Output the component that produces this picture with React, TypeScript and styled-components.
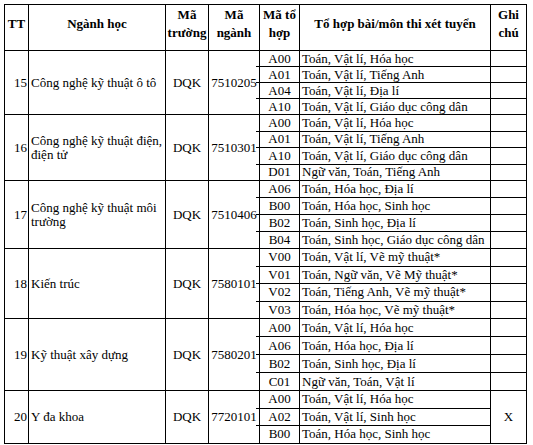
import styled, { createGlobalStyle } from "styled-components";

const GlobalStyle = createGlobalStyle`
  html, body {
    margin: 0;
    padding: 0;
    background: #fff;
  }
  body {
    font-family: "Liberation Serif", "Times New Roman", serif;
    color: #000;
  }
`;

const Table = styled.table`
  margin: 4px 0 0 4px;
  border-collapse: collapse;
  table-layout: fixed;
  width: 523px;
  font-family: "Liberation Serif", "Times New Roman", "DejaVu Serif", serif;
  font-size: 13px;
  color: #000;
  border: 1px solid #000;
`;

const Th = styled.th`
  border: 1px solid #000;
  height: 38px;
  padding: 0 0 7px;
  font-family: "Liberation Serif", "Times New Roman", serif;
  font-size: 13px;
  font-weight: 700;
  line-height: 18px;
  text-align: center;
  vertical-align: middle;
  white-space: nowrap;
`;

const Row = styled.tr<{ $h: number }>`
  height: ${(p) => p.$h}px;
`;

const Td = styled.td<{ $align?: "left" | "center" | "right" }>`
  border: 1px solid #000;
  padding: 0 2px;
  font-family: "Liberation Serif", "Times New Roman", serif;
  font-size: 13px;
  line-height: 14px;
  text-align: ${(p) => p.$align || "left"};
  vertical-align: middle;
  white-space: nowrap;
  overflow: hidden;
`;

const NumCell = styled(Td)`
  padding: 0 1px 0 0;
`;

const NameCell = styled(Td)`
  white-space: normal;
  padding: 0 2px 0 2px;
`;

const CodeCell = styled(Td)`
  position: relative;
  overflow: visible;
  &::after {
    content: "";
    position: absolute;
    left: -4px;
    bottom: -1px;
    width: 4px;
    height: 1px;
    background: #000;
  }
`;

const ComboCell = styled(Td)`
  padding: 0 0 0 2px;
`;

type Group = {
  tt: number;
  name: string;
  code: string;
  rowH: number;
  note?: string;
  combos: [string, string][];
};

const groups: Group[] = [
  {
    tt: 15,
    name: "Công nghệ kỹ thuật ô tô",
    code: "7510205",
    rowH: 16,
    combos: [
      ["A00", "Toán, Vật lí, Hóa học"],
      ["A01", "Toán, Vật lí, Tiếng Anh"],
      ["A04", "Toán, Vật lí, Địa lí"],
      ["A10", "Toán, Vật lí, Giáo dục công dân"],
    ],
  },
  {
    tt: 16,
    name: "Công nghệ kỹ thuật điện, điện tử",
    code: "7510301",
    rowH: 16.5,
    combos: [
      ["A00", "Toán, Vật lí, Hóa học"],
      ["A01", "Toán, Vật lí, Tiếng Anh"],
      ["A10", "Toán, Vật lí, Giáo dục công dân"],
      ["D01", "Ngữ văn, Toán, Tiếng Anh"],
    ],
  },
  {
    tt: 17,
    name: "Công nghệ kỹ thuật môi trường",
    code: "7510406",
    rowH: 17,
    combos: [
      ["A06", "Toán, Hóa học, Địa lí"],
      ["B00", "Toán, Hóa học, Sinh học"],
      ["B02", "Toán, Sinh học, Địa lí"],
      ["B04", "Toán, Sinh học, Giáo dục công dân"],
    ],
  },
  {
    tt: 18,
    name: "Kiến trúc",
    code: "7580101",
    rowH: 17.5,
    combos: [
      ["V00", "Toán, Vật lí, Vẽ mỹ thuật*"],
      ["V01", "Toán, Ngữ văn, Vẽ Mỹ thuật*"],
      ["V02", "Toán, Tiếng Anh, Vẽ mỹ thuật*"],
      ["V03", "Toán, Hóa học, Vẽ mỹ thuật*"],
    ],
  },
  {
    tt: 19,
    name: "Kỹ thuật xây dựng",
    code: "7580201",
    rowH: 18,
    combos: [
      ["A00", "Toán, Vật lí, Hóa học"],
      ["A06", "Toán, Hóa học, Địa lí"],
      ["B02", "Toán, Sinh học, Địa lí"],
      ["C01", "Ngữ văn, Toán, Vật lí"],
    ],
  },
  {
    tt: 20,
    name: "Y đa khoa",
    code: "7720101",
    rowH: 17.5,
    note: "X",
    combos: [
      ["A00", "Toán, Vật lí, Hóa học"],
      ["A02", "Toán, Vật lí, Sinh học"],
      ["B00", "Toán, Hóa học, Sinh học"],
    ],
  },
];

const App = () => {
  return (
    <>
      <GlobalStyle />
      <Table>
        <colgroup>
          <col style={{ width: 24 }} />
          <col style={{ width: 137 }} />
          <col style={{ width: 43 }} />
          <col style={{ width: 51 }} />
          <col style={{ width: 40 }} />
          <col style={{ width: 191 }} />
          <col style={{ width: 36 }} />
        </colgroup>
        <thead>
          <tr>
            <Th>TT</Th>
            <Th>Ngành học</Th>
            <Th>
              Mã
              <br />
              trường
            </Th>
            <Th>
              Mã
              <br />
              ngành
            </Th>
            <Th>
              Mã tổ
              <br />
              hợp
            </Th>
            <Th>Tổ hợp bài/môn thi xét tuyển</Th>
            <Th>
              Ghi
              <br />
              chú
            </Th>
          </tr>
        </thead>
        <tbody>
          {groups.map((g) =>
            g.combos.map(([code, subjects], i) => (
              <Row key={`${g.tt}-${code}`} $h={g.rowH}>
                {i === 0 && (
                  <>
                    <NumCell $align="right" rowSpan={g.combos.length}>
                      {g.tt}
                    </NumCell>
                    <NameCell rowSpan={g.combos.length}>{g.name}</NameCell>
                    <Td $align="center" rowSpan={g.combos.length}>
                      DQK
                    </Td>
                    <Td $align="center" rowSpan={g.combos.length}>
                      {g.code}
                    </Td>
                  </>
                )}
                <CodeCell $align="center">{code}</CodeCell>
                <ComboCell>{subjects}</ComboCell>
                {g.note ? (
                  i === 0 && (
                    <Td $align="center" rowSpan={g.combos.length}>
                      {g.note}
                    </Td>
                  )
                ) : (
                  <Td />
                )}
              </Row>
            ))
          )}
        </tbody>
      </Table>
    </>
  );
};

export default App;
